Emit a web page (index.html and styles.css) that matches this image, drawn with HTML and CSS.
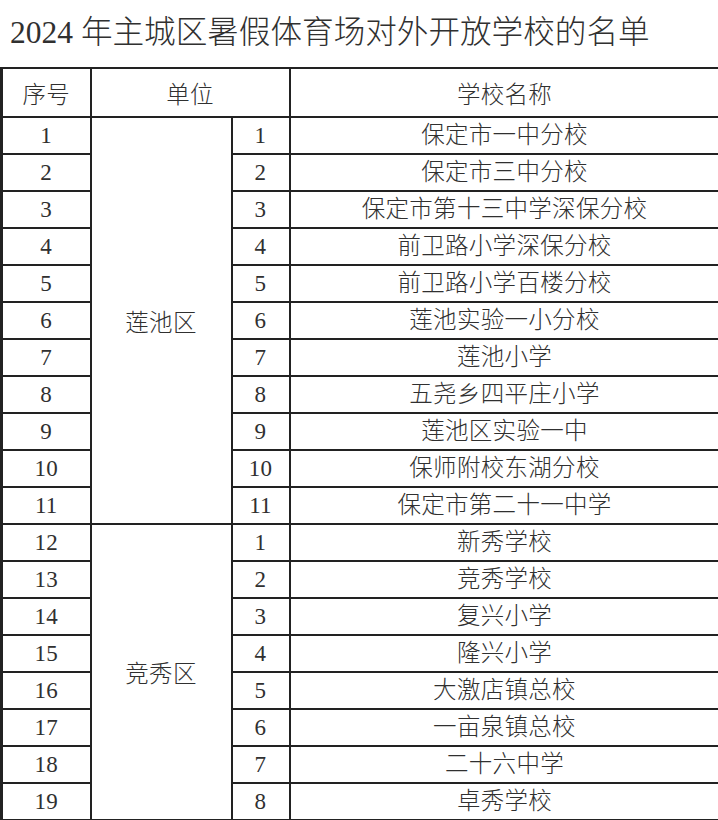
FILE: index.html
```html
<!DOCTYPE html>
<html lang="zh">
<head>
<meta charset="utf-8">
<title>2024年主城区暑假体育场对外开放学校的名单</title>
<link rel="stylesheet" href="styles.css">
</head>
<body>
<h1 class="title"><span class="num">2024</span> 年主城区暑假体育场对外开放学校的名单</h1>
<table class="list">
  <colgroup>
    <col class="c1"><col class="c2"><col class="c3"><col class="c4">
  </colgroup>
  <thead>
    <tr class="head"><th>序号</th><th colspan="2">单位</th><th>学校名称</th></tr>
  </thead>
  <tbody>
    <tr><td class="num">1</td><td class="area" rowspan="11">莲池区</td><td class="num">1</td><td>保定市一中分校</td></tr>
    <tr><td class="num">2</td><td class="num">2</td><td>保定市三中分校</td></tr>
    <tr><td class="num">3</td><td class="num">3</td><td>保定市第十三中学深保分校</td></tr>
    <tr><td class="num">4</td><td class="num">4</td><td>前卫路小学深保分校</td></tr>
    <tr><td class="num">5</td><td class="num">5</td><td>前卫路小学百楼分校</td></tr>
    <tr><td class="num">6</td><td class="num">6</td><td>莲池实验一小分校</td></tr>
    <tr><td class="num">7</td><td class="num">7</td><td>莲池小学</td></tr>
    <tr><td class="num">8</td><td class="num">8</td><td>五尧乡四平庄小学</td></tr>
    <tr><td class="num">9</td><td class="num">9</td><td>莲池区实验一中</td></tr>
    <tr><td class="num">10</td><td class="num">10</td><td>保师附校东湖分校</td></tr>
    <tr><td class="num">11</td><td class="num">11</td><td>保定市第二十一中学</td></tr>
    <tr><td class="num">12</td><td class="area" rowspan="8">竞秀区</td><td class="num">1</td><td>新秀学校</td></tr>
    <tr><td class="num">13</td><td class="num">2</td><td>竞秀学校</td></tr>
    <tr><td class="num">14</td><td class="num">3</td><td>复兴小学</td></tr>
    <tr><td class="num">15</td><td class="num">4</td><td>隆兴小学</td></tr>
    <tr><td class="num">16</td><td class="num">5</td><td>大激店镇总校</td></tr>
    <tr><td class="num">17</td><td class="num">6</td><td>一亩泉镇总校</td></tr>
    <tr><td class="num">18</td><td class="num">7</td><td>二十六中学</td></tr>
    <tr><td class="num">19</td><td class="num">8</td><td>卓秀学校</td></tr>
  </tbody>
</table>
</body>
</html>
```

FILE: styles.css
```css
html, body {
  margin: 0;
  padding: 0;
  background: #ffffff;
}
body {
  width: 718px;
  font-family: "Liberation Serif", "Noto Sans CJK SC", serif;
  color: #303030;
}
.title {
  margin: 0;
  height: 67px;
  box-sizing: border-box;
  padding: 13px 0 0 10px;
  font-size: 31.6px;
  line-height: 40px;
  font-weight: 300;
  white-space: nowrap;
  letter-spacing: 0;
}
.title .num {
  font-size: 31.5px;
}
.list {
  width: 718px;
  table-layout: fixed;
  border-collapse: collapse;
  font-size: 23.5px;
  font-weight: 300;
}
.c1 { width: 89px; }
.c2 { width: 141px; }
.c3 { width: 58px; }
.c4 { width: 430px; }
.list th,
.list td {
  border: 2px solid #222;
  padding: 0;
  text-align: center;
  vertical-align: middle;
  font-weight: 300;
  white-space: nowrap;
  letter-spacing: 0.3px;
}
.list tr > :first-child {
  border-left-width: 3px;
}
.list .head th {
  height: 47px;
  font-size: 23.5px;
}
.list tbody tr {
  height: 37px;
}
.list tbody td {
  height: 35px;
  line-height: 35px;
}
.list td.num {
  font-size: 23px;
}
.list td.area {
  line-height: normal;
}
```
